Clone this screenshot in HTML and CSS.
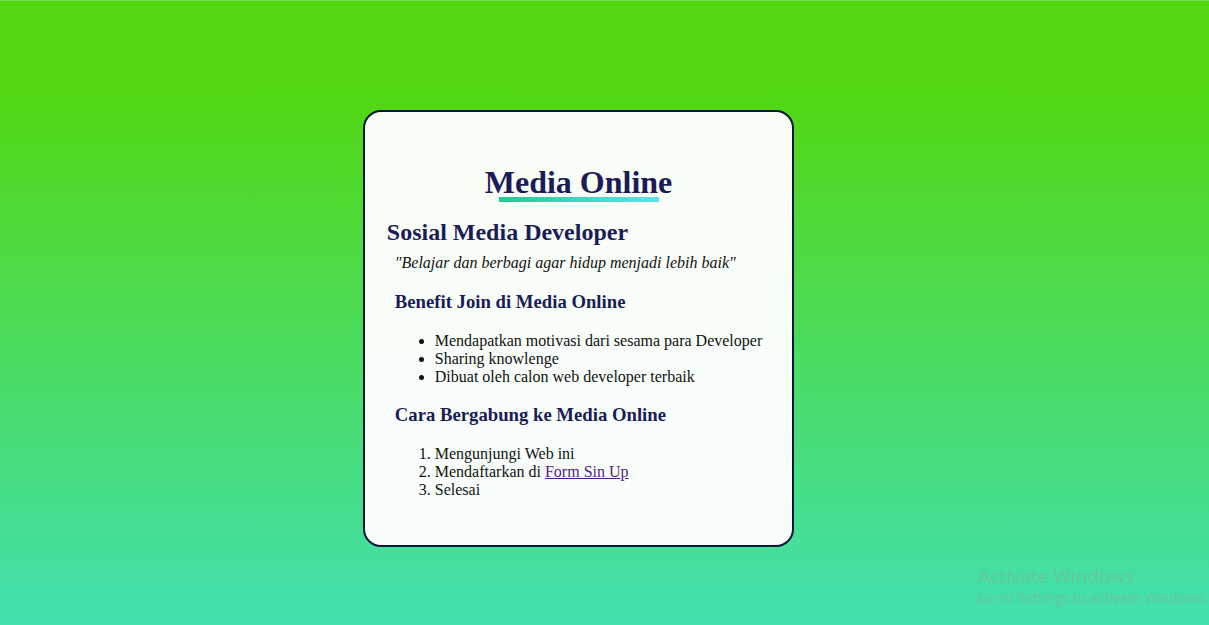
FILE: index.html
```html
<!DOCTYPE html>
<html lang="id">
<head>
<meta charset="utf-8">
<title>Media Online</title>
<link rel="stylesheet" href="styles.css">
</head>
<body>
<main class="card">
  <h1 class="title">Media Online</h1>
  <h2 class="subtitle">Sosial Media Developer</h2>
  <p class="quote">"Belajar dan berbagi agar hidup menjadi lebih baik"</p>
  <h3 class="heading">Benefit Join di Media Online</h3>
  <ul class="list">
    <li>Mendapatkan motivasi dari sesama para Developer</li>
    <li>Sharing knowlenge</li>
    <li>Dibuat oleh calon web developer terbaik</li>
  </ul>
  <h3 class="heading">Cara Bergabung ke Media Online</h3>
  <ol class="list">
    <li>Mengunjungi Web ini</li>
    <li>Mendaftarkan di <a class="link" href="#">Form Sin Up</a></li>
    <li>Selesai</li>
  </ol>
</main>
<aside class="watermark">
  <p class="watermark-title">Activate Windows</p>
  <p class="watermark-text">Go to Settings to activate Windows.</p>
</aside>
</body>
</html>
```
FILE: styles.css
```css
* {
  box-sizing: border-box;
}

body {
  margin: 0;
  min-height: 100vh;
  padding: 109px 52px 78px 0;
  display: flex;
  justify-content: center;
  align-items: flex-start;
  overflow: hidden;
  background: linear-gradient(#52d711 0%, #52d711 14%, #43e0b0 100%);
  border-top: 1px solid #74d957;
  font-family: "Liberation Serif", "Times New Roman", serif;
  font-size: 16px;
  line-height: 18px;
  color: #111;
}

.card {
  padding: 52px 30px 46px;
  border: 2px solid #06173a;
  border-radius: 18px;
  background: rgba(255, 255, 255, 0.96);
}

.title,
.subtitle,
.heading {
  color: #1b1b58;
}

.title {
  margin: 0;
  font-size: 32px;
  line-height: 36px;
  text-align: center;
}

.title::after {
  content: "";
  display: block;
  width: 160px;
  height: 5px;
  margin: -3px auto 0;
  background: linear-gradient(to right, #27c793, #5fe0ee);
}

.subtitle {
  margin: 16px 0 0 -8px;
  font-size: 24px;
  line-height: 28px;
}

.quote {
  margin: 7px 0 0;
  font-style: italic;
  line-height: 20px;
}

.heading {
  margin: 18px 0 0;
  line-height: 22px;
}

.list {
  margin: 19px 0 0;
  padding-left: 40px;
}

.link {
  color: #551a8b;
}

.watermark {
  position: fixed;
  left: calc(100% - 231px);
  bottom: 18px;
  white-space: nowrap;
  font-family: "Open Sans", sans-serif;
  color: rgba(125, 178, 155, 0.6);
}

.watermark-title,
.watermark-text {
  margin: 0;
}

.watermark-title {
  font-size: 19px;
  line-height: 26px;
}

.watermark-text {
  font-size: 14px;
}
```
